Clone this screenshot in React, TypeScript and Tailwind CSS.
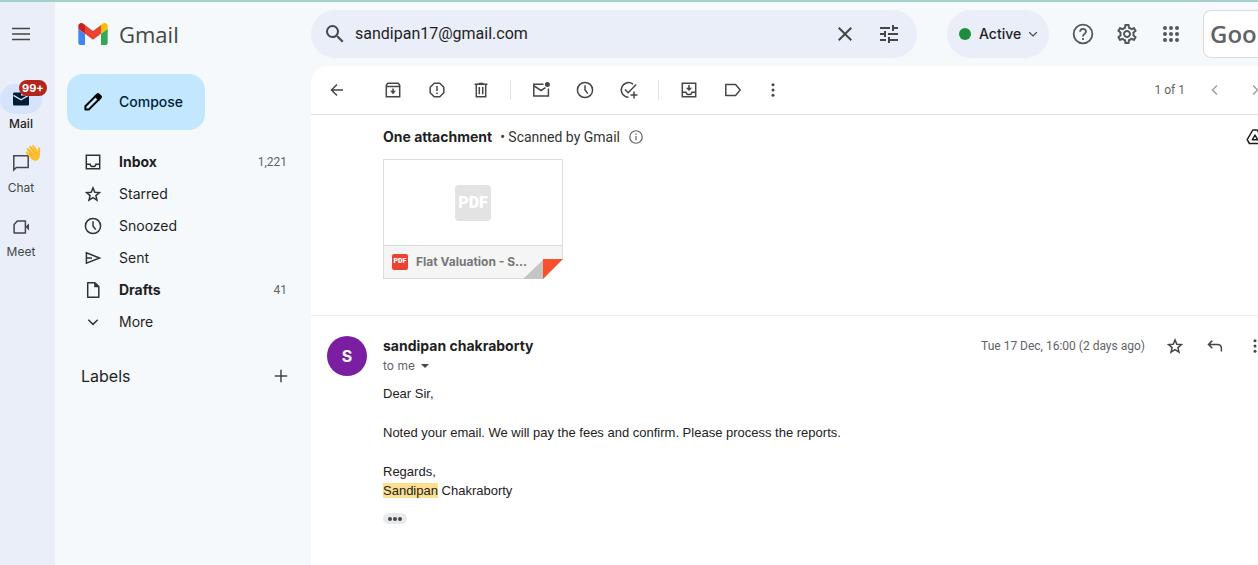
import type { ReactNode } from 'react';
import { MdClose, MdOutlineSettings, MdSearch, MdTune } from 'react-icons/md';

type IconProps = { name: string; size?: string; width?: number };

// 20x20 line icons
const shapes: Record<string, ReactNode> = {
    menu: <path d="M1 4.5h18M1 10h18M1 15.5h18" />,
    back: <path d="M16 10H4.5M10 4.5L4.5 10l5.5 5.5" />,
    archive: (
        <>
            <path d="M3.3 5.2L4.8 3.3h10.4l1.5 1.9v11.5H3.3zM3.3 6.6h13.4M10 8.5v5" />
            <path d="M7 10.8h6L10 14z" fill="currentColor" stroke="none" />
        </>
    ),
    report: (
        <>
            <path d="M7.2 3.2h5.6l4 4v5.6l-4 4H7.2l-4-4V7.2z" strokeLinejoin="round" />
            <path d="M10 6v5M10 12.4v1.7" />
        </>
    ),
    trash: <path d="M3.6 4.3h12.8M7.5 3.6h5M5.3 4.5v12.2h9.4V4.5M8.3 7v7.2M11.7 7v7.2" />,
    unread: (
        <>
            <path d="M12.5 4.2H2.8v11.9h14.6V8.6M3 5.8l7.1 4.7 4.4-2.9" />
            <circle cx="16.4" cy="4.5" r="2.5" fill="currentColor" stroke="none" />
        </>
    ),
    clock: (
        <>
            <circle cx="10" cy="10" r="7.6" />
            <path d="M10 5.2V10l2.8 3.6" />
        </>
    ),
    task: <path d="M9.5 17.2A7.3 7.3 0 1 1 14 4.1M6 9.5l3.2 3.2 8-8.2M15 11.5v7M11.5 15h7" />,
    move: (
        <>
            <path d="M3.3 3.3h13.4v13.4H3.3zM3.5 12.3h3.6c.6 3 5.2 3 5.8 0h3.6M10 5v4" />
            <path d="M6.8 7.8h6.4L10 11z" fill="currentColor" stroke="none" />
        </>
    ),
    label: <path d="M2.8 4.6h9.8l4.6 5.4-4.6 5.4H2.8z" strokeLinejoin="round" />,
    more: (
        <g fill="currentColor" stroke="none">
            <circle cx="10" cy="4.8" r="1.5" />
            <circle cx="10" cy="10" r="1.5" />
            <circle cx="10" cy="15.2" r="1.5" />
        </g>
    ),
    left: <path d="M12 5.5L7.5 10l4.5 4.5" />,
    right: <path d="M8 5.5l4.5 4.5L8 14.5" />,
    down: <path d="M5.3 7.8l4.7 4.6 4.7-4.6" />,
    plus: <path d="M10 3.8v12.4M3.8 10h12.4" />,
    inbox: <path d="M3.3 3.3h13.4v13.4H3.3zM3.5 12.3h3.6c.6 3 5.2 3 5.8 0h3.6" />,
    star: <path d="M10 3.9l1.8 4.3 4.6.4-3.5 3 1.1 4.6-4-2.5-4 2.5 1.1-4.6-3.5-3 4.6-.4z" />,
    send: <path d="M3.4 4.8L16.6 10 3.4 15.2zM3.5 10H9" />,
    file: (
        <>
            <path d="M4.7 2.7h7.2l3.9 3.9v10.7H4.7z" strokeLinejoin="round" />
            <path d="M11.2 2.5v4.8H16z" fill="currentColor" stroke="none" />
        </>
    ),
    chat: <path d="M2.8 2.8h14.4v11.6H5.3l-2.5 2.6z" />,
    meet: (
        <>
            <path d="M6.4 3.9h8v12.2H3.1V7.4z" strokeLinejoin="round" />
            <path d="M14.4 9.8L18 6.4v7.2z" fill="currentColor" stroke="none" />
        </>
    ),
    reply: <path d="M7.3 4.6L3.5 8.4l3.8 3.8M3.7 8.4h8.6c2.6 0 4.1 1.6 4.1 4v3" />,
    help: (
        <>
            <circle cx="10" cy="10" r="7.8" />
            <path d="M7.6 8.1c0-3.3 4.9-3.1 4.9-.2 0 2-2.5 2-2.5 4.1M10 13.3v1.7" />
        </>
    ),
    info: (
        <>
            <circle cx="10" cy="10" r="7.8" />
            <path d="M10 8.8v5.4M10 5.6v1.8" />
        </>
    ),
    drive: <path d="M7.8 3h4.4l5.6 9.7-2.2 3.8H4.4l-2.2-3.8zM7.3 12.8L10 8l2.7 4.8z" strokeLinejoin="round" />,
};

function Icon({ name, size = 'size-5', width = 1.5 }: IconProps) {
    return (
        <svg viewBox="0 0 20 20" className={`${size} shrink-0`} fill="none" stroke="currentColor" strokeWidth={width} aria-hidden="true">
            {shapes[name]}
        </svg>
    );
}

function IconButton({ name, label, size }: { name: string; label: string; size?: string }) {
    return (
        <button type="button" aria-label={label} className="shrink-0">
            <Icon name={name} size={size} />
        </button>
    );
}

function GmailLogo() {
    return (
        <svg viewBox="52 42 88 66" className="w-[30px] h-[22px]" aria-hidden="true">
            <path fill="#4285f4" d="M58 108h14V74L52 59v43c0 3.32 2.69 6 6 6" />
            <path fill="#34a853" d="M120 108h14c3.32 0 6-2.69 6-6V59l-20 15" />
            <path fill="#fbbc04" d="M120 48v26l20-15v-8c0-7.42-8.47-11.65-14.4-7.2" />
            <path fill="#ea4335" d="M72 74V48l24 18 24-18v26L96 92" />
            <path fill="#c5221f" d="M52 51v8l20 15V48l-5.6-4.2c-5.94-4.45-14.4-.22-14.4 7.2" />
        </svg>
    );
}

function MailIcon() {
    return (
        <svg viewBox="0 0 20 20" className="size-5" aria-hidden="true">
            <path d="M2 5c0-.8.6-1.4 1.4-1.4H10v3h8v8.6c0 .8-.6 1.4-1.4 1.4H3.4c-.8 0-1.4-.6-1.4-1.4z" fill="#001d35" />
            <path d="M2.5 6.4L10 10.8l7.5-4.4" fill="none" stroke="#d6e3fd" strokeWidth="1.4" />
        </svg>
    );
}

function WaveIcon() {
    return (
        <svg viewBox="0 0 18 18" className="size-[18px]" aria-hidden="true">
            <path d="M3.6 5.1l6 7.4M6.2 3l5.2 7M9.2 2.2l4.4 6.4M2.7 8.5l5.8 5.6M15.2 4.7l-.5 6" stroke="#fbc02d" strokeWidth="2.3" strokeLinecap="round" />
            <path d="M6.5 10.5l7.3-3.8 1.8 3.8c.8 2.6-.6 5-2.7 6-2 .7-4 .1-5.2-1.4l-2.4-2.4z" fill="#fbc02d" />
            <path d="M4.8 5.1l4.6 5.4M7.5 3.4l4.3 5.8M4.6 8.7l3.5 3.5" stroke="#e59600" strokeWidth=".6" />
        </svg>
    );
}

function RailItem({ label, icon, badge, active }: { label: string; icon: ReactNode; badge?: ReactNode; active?: boolean }) {
    return (
        <a href="#" className="h-16 flex flex-col items-center">
            <span className={`relative w-[42px] h-[30px] rounded-full flex items-center justify-center ${active ? 'bg-[#d6e3fd]' : ''}`}>
                {icon}
                {badge}
            </span>
            <span className={`text-xs leading-5 ${active ? 'font-medium text-[#1f1f1f]' : 'text-[#444746]'}`}>{label}</span>
        </a>
    );
}

function Rail() {
    return (
        <nav aria-label="Apps" className="w-[55px] shrink-0 bg-[#e9eef8]">
            <div className="w-[42px] pt-[22px] text-[#444746]">
                <button type="button" aria-label="Main menu" className="flex mx-auto mb-10">
                    <Icon name="menu" />
                </button>
                <RailItem
                    label="Mail"
                    active
                    icon={<MailIcon />}
                    badge={
                        <span className="absolute left-[19px] -top-1 h-4 px-[3px] rounded-full bg-[#b3261e] text-white text-[11px] leading-4 font-bold">
                            99+
                        </span>
                    }
                />
                <RailItem label="Chat" icon={<Icon name="chat" />} badge={<span className="absolute left-6 -top-1"><WaveIcon /></span>} />
                <RailItem label="Meet" icon={<Icon name="meet" />} />
            </div>
        </nav>
    );
}

const folders = [
    { icon: 'inbox', label: 'Inbox', count: '1,221' },
    { icon: 'star', label: 'Starred' },
    { icon: 'clock', label: 'Snoozed' },
    { icon: 'send', label: 'Sent' },
    { icon: 'file', label: 'Drafts', count: '41' },
    { icon: 'down', label: 'More' },
];

function Sidebar() {
    return (
        <aside className="w-64 shrink-0">
            <div className="h-16 pl-[23px] flex items-center gap-[11px]">
                <GmailLogo />
                <span className="font-['Open_Sans',sans-serif] text-[22px] text-[#444746]">Gmail</span>
            </div>
            <button type="button" className="mt-2 ml-3 h-14 w-[138px] pl-4 rounded-2xl bg-[#c2e7ff] flex items-center gap-4 text-sm font-medium text-[#001d35]">
                <svg viewBox="0 0 20 20" className="size-5" fill="none" stroke="#000" strokeWidth="2" strokeLinejoin="round" aria-hidden="true">
                    <path d="M2.4 17.6v-3.3L12.8 3.9l3.3 3.3L5.7 17.6z" />
                    <path d="M12.4 4.3l1.9-1.9c.5-.5 1-.5 1.5 0l1.8 1.8c.5.5.5 1 0 1.5l-1.9 1.9z" fill="#000" />
                </svg>
                Compose
            </button>
            <nav aria-label="Folders" className="mt-4 pl-7 pr-6 text-sm text-[#1f1f1f]">
                {folders.map((f) => (
                    <a key={f.label} href="#" className="h-8 flex items-center">
                        <span className="text-[#303332]"><Icon name={f.icon} /></span>
                        <span className={`ml-4 flex-1 ${f.count ? 'font-bold' : ''}`}>{f.label}</span>
                        {f.count && <span className="font-['Roboto',sans-serif] text-xs text-[#5f6368]">{f.count}</span>}
                    </a>
                ))}
            </nav>
            <div className="mt-7 pl-[26px] pr-5 h-5 flex items-center justify-between">
                <h2 className="text-base leading-5 text-[#1f1f1f]">Labels</h2>
                <span className="flex text-[#444746]"><IconButton name="plus" label="Create new label" /></span>
            </div>
        </aside>
    );
}

function Header() {
    return (
        <header className="h-16 flex items-center text-[#444746]">
            <form className="flex-1 min-w-0 h-12 pl-3 pr-4 rounded-full bg-[#e9eef8] flex items-center">
                <button type="button" aria-label="Search"><MdSearch className="size-6" /></button>
                <input
                    type="text"
                    aria-label="Search mail"
                    defaultValue="sandipan17@gmail.com"
                    className="ml-2 flex-1 min-w-0 bg-transparent font-['Roboto',sans-serif] text-base text-[#1f1f1f] outline-none"
                />
                <button type="button" aria-label="Clear search"><MdClose className="size-6" /></button>
                <button type="button" aria-label="Search options" className="ml-5"><MdTune className="size-6" /></button>
            </form>
            <button type="button" className="ml-[30px] h-12 w-[102px] pl-3 rounded-full bg-[#e9eef8] flex items-center text-sm font-medium text-[#1f1f1f]">
                <span className="size-3 rounded-full bg-[#1e8e3e] mr-2" />
                Active
                <span className="ml-1 text-[#444746]"><Icon name="down" size="size-4" /></span>
            </button>
            <div className="ml-[22px] mr-5 flex items-center gap-5 text-[#54585c]">
                <IconButton name="help" label="Support" size="size-6" />
                <button type="button" aria-label="Settings"><MdOutlineSettings className="size-6" /></button>
                <button type="button" aria-label="Google apps">
                    <svg viewBox="0 0 24 24" className="size-6" fill="currentColor" aria-hidden="true">
                        {[6, 12, 18].map((y) => [6, 12, 18].map((x) => <circle key={`${x}-${y}`} cx={x} cy={y} r="2" />))}
                    </svg>
                </button>
            </div>
            <div className="w-[55px] h-12 pl-1.5 shrink-0 overflow-hidden rounded-l-lg border border-r-0 border-[#d9dbe0] bg-white flex items-center font-['Open_Sans',sans-serif] text-2xl font-semibold text-[#5f6368]">
                Goo
            </div>
        </header>
    );
}

function Divider() {
    return <span className="-ml-[5px] -mr-1 w-px h-5 bg-[#e3e5e8]" />;
}

function Toolbar() {
    return (
        <div className="h-[49px] pl-4 border-b border-[#dfe1e3] flex items-center gap-6 text-[#444746]">
            <span className="mr-3 flex"><IconButton name="back" label="Back to search results" /></span>
            <IconButton name="archive" label="Archive" />
            <IconButton name="report" label="Report spam" />
            <IconButton name="trash" label="Delete" />
            <Divider />
            <IconButton name="unread" label="Mark as unread" />
            <IconButton name="clock" label="Snooze" />
            <IconButton name="task" label="Add to tasks" />
            <Divider />
            <IconButton name="move" label="Move to" />
            <IconButton name="label" label="Labels" />
            <span className="-ml-1 flex"><IconButton name="more" label="More" /></span>
            <div className="ml-auto -mr-[7px] flex items-center gap-5 text-[#9aa0a6]">
                <span className="font-['Roboto',sans-serif] text-xs text-[#5f6368]">1 of 1</span>
                <IconButton name="left" label="Newer" />
                <IconButton name="right" label="Older" />
            </div>
        </div>
    );
}

function Attachments() {
    return (
        <section className="pl-[72px] pt-3 pb-9 border-b border-[#eceef1]">
            <div className="flex items-center text-sm leading-5 text-[#1f1f1f]">
                <h3 className="font-bold">One attachment</h3>
                <span className="mx-2 font-['Roboto',sans-serif] text-[#333]">• Scanned by Gmail</span>
                <span className="text-[#5f6368]"><Icon name="info" size="size-4" /></span>
                <span className="ml-auto -mr-[7px] flex"><IconButton name="drive" label="Add to Drive" /></span>
            </div>
            <a href="#" className="relative mt-3 w-[180px] h-[120px] border border-[#dcdcdc] flex flex-col">
                <span className="flex-1 flex items-center justify-center">
                    <span className="size-9 rounded bg-[#e3e3e3] text-white flex items-center justify-center font-['Roboto',sans-serif] text-base font-black">PDF</span>
                </span>
                <span className="h-[33px] pl-2 border-t border-[#dcdcdc] bg-[#f5f5f5] flex items-center gap-2 text-xs font-bold text-[#777]">
                    <span className="size-4 rounded-xs bg-[#ea4335] text-white flex items-center justify-center font-['Roboto',sans-serif] text-[7px] font-black">PDF</span>
                    Flat Valuation - S...
                </span>
                <svg viewBox="0 0 40 20" className="absolute -right-px -bottom-px w-10 h-5" aria-hidden="true">
                    <path d="M20 20V0h20z" fill="#fff" />
                    <path d="M40 0v20H20z" fill="#fff" />
                    <path d="M0 20L20 1v19z" fill="#c4c6c6" />
                    <path d="M20 0h20L20 20z" fill="#f4512c" />
                </svg>
            </a>
        </section>
    );
}

function Message() {
    return (
        <article className="pl-4 pt-5 flex gap-4">
            <div className="size-10 shrink-0 rounded-full bg-[#7b1fa2] text-white text-base font-bold flex items-center justify-center">S</div>
            <div className="flex-1 min-w-0">
                <div className="h-5 flex items-center">
                    <h3 className="text-sm font-bold text-[#1f1f1f]">sandipan chakraborty</h3>
                    <div className="ml-auto -mr-[7px] flex items-center gap-5 text-[#444746]">
                        <span className="font-['Roboto',sans-serif] text-xs text-[#5f6368]">Tue 17 Dec, 16:00 (2 days ago)</span>
                        <IconButton name="star" label="Star" />
                        <IconButton name="reply" label="Reply" />
                        <IconButton name="more" label="More options" />
                    </div>
                </div>
                <button type="button" className="h-5 flex items-center gap-1.5 text-xs text-[#5f6368]">
                    to me
                    <svg viewBox="0 0 8 4" className="w-2 h-1" fill="#444746" aria-hidden="true"><path d="M0 0h8L4 4z" /></svg>
                </button>
                <div className="mt-2 font-['Liberation_Sans',sans-serif] text-[13px] leading-[19px] text-[#222]">
                    <p>Dear Sir,</p>
                    <p className="mt-5">Noted your email. We will pay the fees and confirm. Please process the reports.</p>
                    <p className="mt-5">
                        Regards,
                        <br />
                        <mark className="bg-[#fddf8f] text-inherit">Sandipan</mark> Chakraborty
                    </p>
                </div>
                <button type="button" aria-label="Show trimmed content" className="mt-[13px] w-6 h-[11px] rounded-full bg-[#e8eaed] flex items-center justify-center gap-px">
                    <span className="size-1 rounded-full bg-[#444746]" />
                    <span className="size-1 rounded-full bg-[#444746]" />
                    <span className="size-1 rounded-full bg-[#444746]" />
                </button>
            </div>
        </article>
    );
}

export default function App() {
    return (
        <div className="min-h-screen overflow-hidden flex flex-col border-t-2 border-[#a5cfcb] bg-[#f6f9fc] font-['Inter',sans-serif]">
            <div className="flex-1 flex">
                <Rail />
                <Sidebar />
                <div className="flex-1 min-w-0 flex flex-col">
                    <Header />
                    <main className="flex-1 bg-white rounded-tl-2xl">
                        <Toolbar />
                        <Attachments />
                        <Message />
                    </main>
                </div>
            </div>
        </div>
    );
}
